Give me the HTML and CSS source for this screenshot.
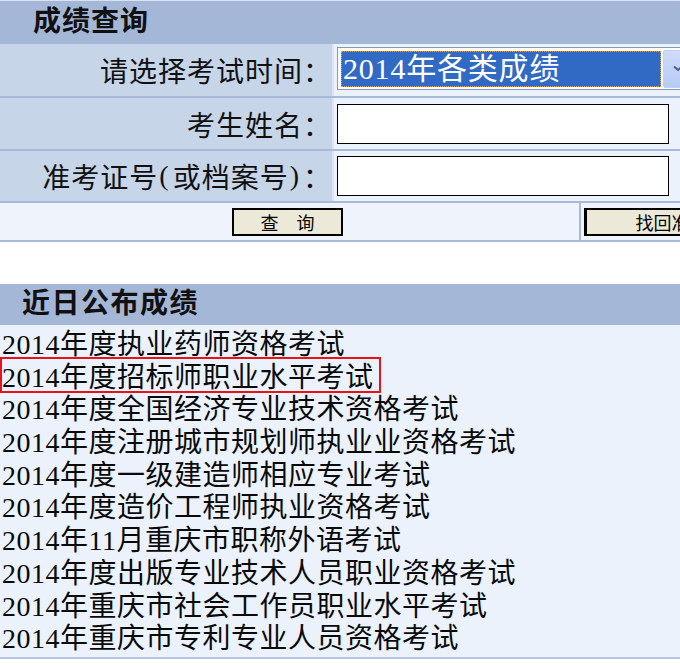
FILE: index.html
```html
<!DOCTYPE html>
<html lang="zh-CN">
<head>
<meta charset="utf-8">
<title>成绩查询</title>
<link rel="stylesheet" href="styles.css">
</head>
<body>
<div class="page">
  <section class="query">
    <div class="panel-title title-query">成绩查询</div>
    <div class="form-row row-1">
      <div class="label">请选择考试时间：</div>
      <div class="value">
        <div class="select">
          <div class="select-text"><span class="select-inner">2014年各类成绩</span></div>
          <div class="select-btn">
            <svg width="10" height="7" viewBox="0 0 10 7"><path d="M1 1.5 L5 5 L9 1.5" fill="none" stroke="#4d6185" stroke-width="2"/></svg>
          </div>
        </div>
      </div>
    </div>
    <div class="form-row row-2">
      <div class="label">考生姓名：</div>
      <div class="value"><div class="input"></div></div>
    </div>
    <div class="form-row row-3">
      <div class="label">准考证号<span class="paren">(</span>或档案号<span class="paren">)</span>：</div>
      <div class="value"><div class="input"></div></div>
    </div>
    <div class="btn-row">
      <div class="btn-cell btn-cell-main"><span class="btn btn-query">查　询</span></div>
      <div class="btn-cell btn-cell-side"><span class="btn btn-find">找回准考证号</span></div>
    </div>
  </section>

  <section class="recent">
    <div class="panel-title title-recent">近日公布成绩</div>
    <ul class="list">
      <li>2014年度执业药师资格考试</li>
      <li class="marked">2014年度招标师职业水平考试</li>
      <li>2014年度全国经济专业技术资格考试</li>
      <li>2014年度注册城市规划师执业业资格考试</li>
      <li>2014年度一级建造师相应专业考试</li>
      <li>2014年度造价工程师执业资格考试</li>
      <li>2014年11月重庆市职称外语考试</li>
      <li>2014年度出版专业技术人员职业资格考试</li>
      <li>2014年重庆市社会工作员职业水平考试</li>
      <li>2014年重庆市专利专业人员资格考试</li>
    </ul>
  </section>
</div>
</body>
</html>
```

FILE: styles.css
```css
html, body {
  margin: 0;
  padding: 0;
  overflow: hidden;
  background: #ffffff;
}

body {
  width: 680px;
  font-family: "Liberation Serif", "Noto Sans CJK SC", serif;
  color: #000000;
}

.page {
  width: 820px;
}

.panel-title {
  background: #a5b7d7;
  font-size: 28px;
  font-weight: 600;
  color: #111111;
  box-sizing: border-box;
}

.title-query {
  height: 44px;
  line-height: 42px;
  padding-left: 33px;
  border-top: 1px solid #d9e2f0;
  letter-spacing: 1px;
}

.form-row {
  display: flex;
  border-bottom: 2px solid #a8badb;
}

.row-1 { height: 52px; }
.row-2 { height: 51px; }
.row-3 { height: 50px; }

.label {
  width: 332px;
  flex: none;
  background: #c6d5e8;
  border-right: 2px solid #dbe5f2;
  display: flex;
  align-items: center;
  justify-content: flex-end;
  font-size: 28px;
  letter-spacing: 1px;
  color: #111111;
}

.paren {
  letter-spacing: 4px;
  padding-left: 1px;
}

.value {
  flex: 1;
  background: #ebf2fc;
  display: flex;
  align-items: center;
  padding-left: 3px;
}

.select {
  display: flex;
  align-items: center;
  border: 1px solid #7f9db9;
  background: #ffffff;
  height: 43px;
  box-sizing: border-box;
  padding: 0 3px;
  align-self: flex-start;
  margin-top: 3px;
}

.select-text {
  width: 320px;
  height: 36px;
  box-sizing: border-box;
  background: #316ac5;
  border: 1px dotted #e8a33a;
  color: #ffffff;
  font-size: 30px;
  line-height: 34px;
  padding-left: 1px;
  letter-spacing: 0.8px;
  overflow: hidden;
  white-space: nowrap;
}

.select-btn {
  width: 30px;
  height: 38px;
  margin-left: 2px;
  border-radius: 2px;
  background: linear-gradient(#cfdcfb, #b7cbf5);
  border: 1px solid #c0d0f2;
  box-sizing: border-box;
  display: flex;
  align-items: center;
  padding-left: 9px;
}

.input {
  width: 332px;
  height: 40px;
  box-sizing: border-box;
  border: 1px solid #000000;
  background: #ffffff;
}

.btn-row {
  display: flex;
  height: 37px;
  background: #eef3fc;
  border-bottom: 2px solid #a8badb;
}

.btn-cell {
  display: flex;
  align-items: center;
}

.btn-cell-main {
  width: 579px;
  justify-content: center;
  padding-right: 4px;
  box-sizing: border-box;
}

.btn-cell-side {
  flex: 1;
  border-left: 2px solid #a8badb;
  padding-left: 3px;
}

.btn {
  display: flex;
  align-items: center;
  justify-content: center;
  height: 28px;
  box-sizing: border-box;
  background: #ece9d8;
  border: 2px solid #000000;
  font-size: 18px;
  font-family: "Noto Sans CJK SC", sans-serif;
  line-height: 1;
}

.btn-query {
  width: 111px;
}

.btn-find {
  width: 210px;
  border-left-width: 3px;
}

.recent {
  margin-top: 42px;
}

.title-recent {
  height: 41px;
  line-height: 40px;
  padding-left: 22px;
  letter-spacing: 1.5px;
}

.list {
  list-style: none;
  margin: 0;
  padding: 4px 0 1px;
  background: #ebf2fc;
  border-bottom: 2px solid #b9c7de;
}

.list li {
  font-size: 28px;
  line-height: 32.7px;
  height: 32.7px;
  padding-left: 2px;
  letter-spacing: 0.5px;
  white-space: nowrap;
  color: #0a0a0a;
}

.list li.marked {
  position: relative;
}

.list li.marked::after {
  content: "";
  position: absolute;
  left: 0;
  top: -5px;
  width: 381px;
  height: 36px;
  box-sizing: border-box;
  border: 2px solid #e8121a;
}
```
